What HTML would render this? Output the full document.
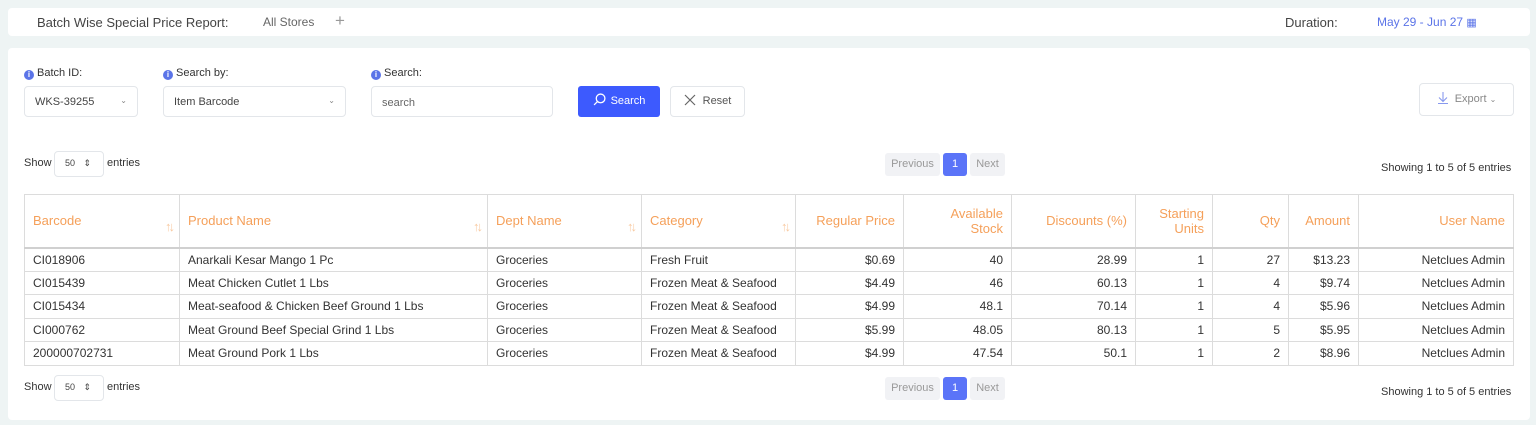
<!DOCTYPE html>
<html><head><meta charset="utf-8"><style>
*{box-sizing:border-box;margin:0;padding:0}
body{width:1536px;height:425px;background:#eef4f4;font-family:"Liberation Sans",sans-serif;color:#333;position:relative;overflow:hidden;font-size:12px}
.abs{position:absolute}
.card{position:absolute;background:#fff;border-radius:4px}
.lbl{font-size:11px;color:#333}
.info{display:inline-block;width:10px;height:10px;border-radius:50%;background:#5b74e8;color:#fff;font-size:8px;text-align:center;line-height:10px;font-weight:bold;margin-right:3px;vertical-align:-1px}
.box{position:absolute;border:1px solid #e3e6ea;border-radius:4px;background:#fff;font-size:11px;color:#444}
table{position:absolute;left:24px;top:194px;width:1490px;border-collapse:collapse;font-size:12px}
td,th{border:1px solid #dcdcdc;padding:0 8px;height:23.5px;white-space:nowrap}
th{height:53px;color:#f5a05a;font-weight:normal;font-size:13px;text-align:left;border-bottom:2px solid #d0d0d0;position:relative}
th.r,td.r{text-align:right}
.s{position:absolute;right:7px;top:24px;color:#f8c9a0;font-size:13px;letter-spacing:-3px}
.pg{position:absolute;height:23px;border-radius:3px;font-size:11px;line-height:23px;text-align:center;color:#999;background:#f1f2f5}
</style></head><body>
<div class="card" style="left:8px;top:8px;width:1522px;height:28px"></div>
<div class="abs" style="left:37px;top:15px;font-size:13px;color:#444">Batch Wise Special Price Report:</div>
<div class="abs" style="left:263px;top:15px;font-size:12px;color:#666">All Stores</div>
<div class="abs" style="left:335px;top:11px;font-size:17px;color:#999">+</div>
<div class="abs" style="left:1285px;top:15px;font-size:13px;color:#444">Duration:</div>
<div class="abs" style="left:1377px;top:15px;font-size:12px;color:#5b74e8">May 29 - Jun 27 <span style="font-size:11px">&#9638;</span></div>

<div class="card" style="left:8px;top:48px;width:1522px;height:372px"></div>
<div class="abs lbl" style="left:24px;top:67px"><span class="info">i</span>Batch ID:</div>
<div class="abs lbl" style="left:163px;top:67px"><span class="info">i</span>Search by:</div>
<div class="abs lbl" style="left:371px;top:67px"><span class="info">i</span>Search:</div>
<div class="box" style="left:24px;top:86px;width:114px;height:31px;padding:9px 10px">WKS-39255<span style="float:right;font-size:8px;color:#888">&#8964;</span></div>
<div class="box" style="left:163px;top:86px;width:183px;height:31px;padding:9px 10px">Item Barcode<span style="float:right;font-size:8px;color:#888">&#8964;</span></div>
<div class="box" style="left:371px;top:86px;width:182px;height:31px;padding:10px 10px;color:#666">search</div>
<div class="abs" style="left:578px;top:86px;width:82px;height:31px;background:#3d5afe;border-radius:3px;color:#fff;font-size:11px;line-height:31px;text-align:center"><svg width="13" height="13" viewBox="0 0 12 12" style="vertical-align:-2px;margin-right:5px"><circle cx="7" cy="5" r="4" fill="none" stroke="#fff" stroke-width="1.2"/><path d="M4 8L1 11" stroke="#fff" stroke-width="1.2"/></svg>Search</div>
<div class="box" style="left:670px;top:86px;width:75px;height:31px;line-height:29px;text-align:center;color:#555"><svg width="12" height="12" viewBox="0 0 12 12" style="vertical-align:-2px;margin-right:7px"><path d="M1 1L11 11M11 1L1 11" stroke="#666" stroke-width="1.2"/></svg>Reset</div>
<div class="box" style="left:1419px;top:83px;width:95px;height:33px;line-height:31px;text-align:center;color:#888"><svg width="12" height="13" viewBox="0 0 12 13" style="vertical-align:-2px;margin-right:6px"><path d="M6 1V10M2 6.5L6 10.5L10 6.5M1 12.5H11" stroke="#8899ee" stroke-width="1.1" fill="none"/></svg>Export <span style="font-size:8px">&#8964;</span></div>

<div class="abs" style="left:24px;top:157px;font-size:11px">Show</div>
<div class="box" style="left:54px;top:151px;width:50px;height:26px;padding:6px 10px;font-size:9px">50 <span style="margin-left:6px">&#8661;</span></div>
<div class="abs" style="left:107px;top:157px;font-size:11px">entries</div>
<div class="pg" style="left:885px;top:153px;width:55px">Previous</div>
<div class="pg" style="left:943px;top:153px;width:24px;background:#5b74f8;color:#fff">1</div>
<div class="pg" style="left:970px;top:153px;width:35px">Next</div>
<div class="abs" style="left:1381px;top:162px;font-size:11px">Showing 1 to 5 of 5 entries</div>

<table>
<tr><th style="width:155px">Barcode<span class="s">↑↓</span></th><th style="width:308px">Product Name<span class="s">↑↓</span></th><th style="width:154px">Dept Name<span class="s">↑↓</span></th><th style="width:154px">Category<span class="s">↑↓</span></th><th class="r" style="width:108px">Regular Price</th><th class="r" style="width:108px">Available<br>Stock</th><th class="r" style="width:124px">Discounts (%)</th><th class="r" style="width:77px">Starting<br>Units</th><th class="r" style="width:76px">Qty</th><th class="r" style="width:70px">Amount</th><th class="r">User Name</th></tr>
<tr><td>CI018906</td><td>Anarkali Kesar Mango 1 Pc</td><td>Groceries</td><td>Fresh Fruit</td><td class="r">$0.69</td><td class="r">40</td><td class="r">28.99</td><td class="r">1</td><td class="r">27</td><td class="r">$13.23</td><td class="r">Netclues Admin</td></tr>
<tr><td>CI015439</td><td>Meat Chicken Cutlet 1 Lbs</td><td>Groceries</td><td>Frozen Meat &amp; Seafood</td><td class="r">$4.49</td><td class="r">46</td><td class="r">60.13</td><td class="r">1</td><td class="r">4</td><td class="r">$9.74</td><td class="r">Netclues Admin</td></tr>
<tr><td>CI015434</td><td>Meat-seafood &amp; Chicken Beef Ground 1 Lbs</td><td>Groceries</td><td>Frozen Meat &amp; Seafood</td><td class="r">$4.99</td><td class="r">48.1</td><td class="r">70.14</td><td class="r">1</td><td class="r">4</td><td class="r">$5.96</td><td class="r">Netclues Admin</td></tr>
<tr><td>CI000762</td><td>Meat Ground Beef Special Grind 1 Lbs</td><td>Groceries</td><td>Frozen Meat &amp; Seafood</td><td class="r">$5.99</td><td class="r">48.05</td><td class="r">80.13</td><td class="r">1</td><td class="r">5</td><td class="r">$5.95</td><td class="r">Netclues Admin</td></tr>
<tr><td>200000702731</td><td>Meat Ground Pork 1 Lbs</td><td>Groceries</td><td>Frozen Meat &amp; Seafood</td><td class="r">$4.99</td><td class="r">47.54</td><td class="r">50.1</td><td class="r">1</td><td class="r">2</td><td class="r">$8.96</td><td class="r">Netclues Admin</td></tr>
</table>

<div class="abs" style="left:24px;top:381px;font-size:11px">Show</div>
<div class="box" style="left:54px;top:375px;width:50px;height:26px;padding:6px 10px;font-size:9px">50 <span style="margin-left:6px">&#8661;</span></div>
<div class="abs" style="left:107px;top:381px;font-size:11px">entries</div>
<div class="pg" style="left:885px;top:377px;width:55px">Previous</div>
<div class="pg" style="left:943px;top:377px;width:24px;background:#5b74f8;color:#fff">1</div>
<div class="pg" style="left:970px;top:377px;width:35px">Next</div>
<div class="abs" style="left:1381px;top:386px;font-size:11px">Showing 1 to 5 of 5 entries</div>
</body></html>
